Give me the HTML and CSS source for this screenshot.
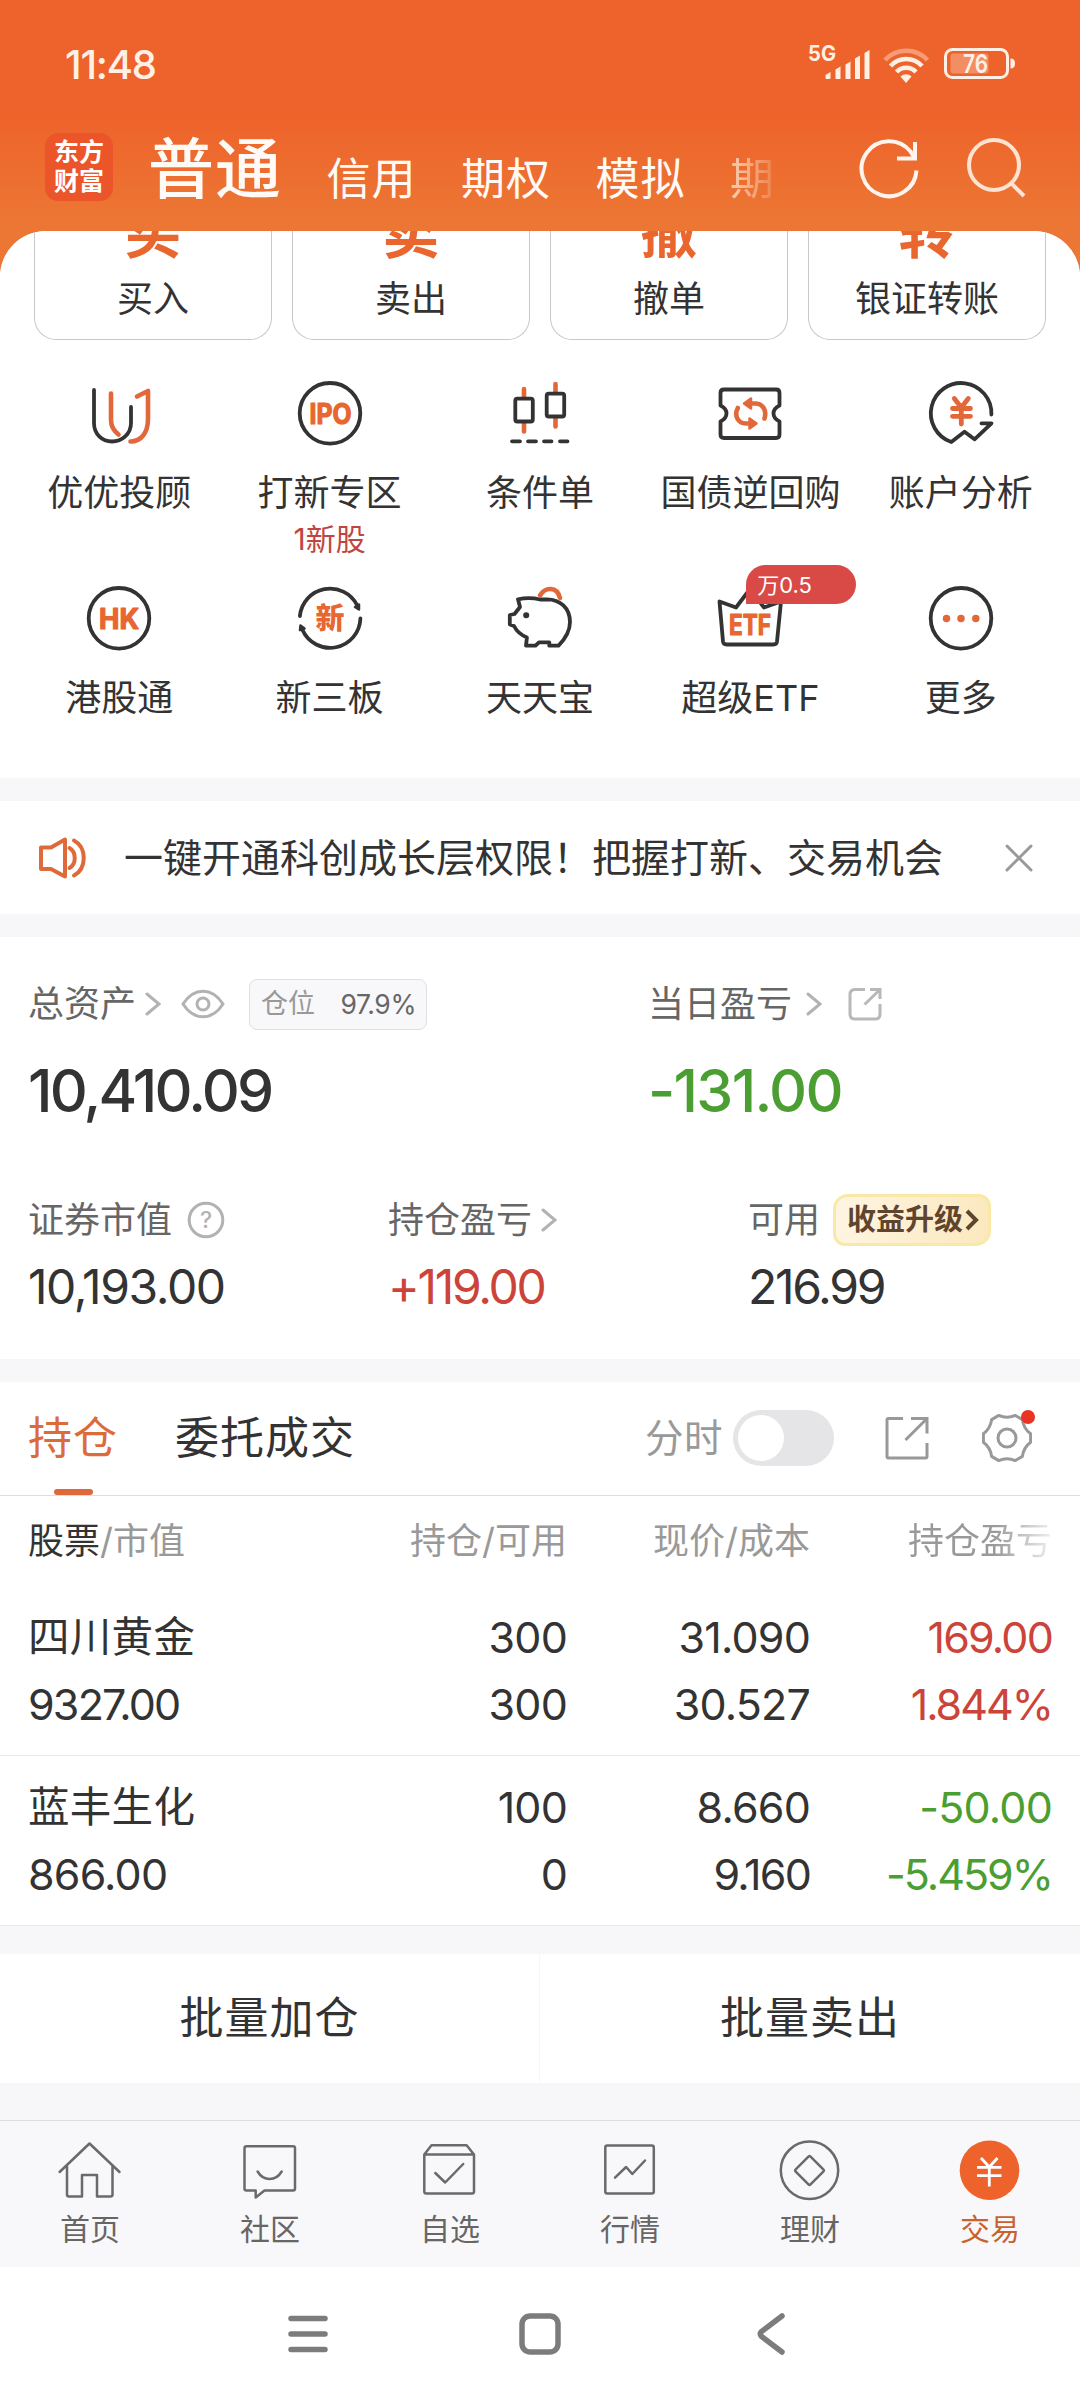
FILE: index.html
```html
<!DOCTYPE html>
<html lang="zh-CN">
<head>
<meta charset="utf-8">
<title>交易</title>
<link rel="stylesheet" href="styles.css">
</head>
<body>
<div class="app">
  <header class="top">
    <div class="status">
      <span class="clock">11:48</span>
      <svg class="status-icons" width="212" height="44" viewBox="0 0 212 44" fill="#fff0e6">
        <text class="net" x="0" y="21" textLength="28" lengthAdjust="spacingAndGlyphs">5G</text>
        <path d="M17.500 38v-3l5-3v6q0 1-1 1h-3q-1 0-1-1zM27.500 39V29.500l5-3V39zM37.500 39V24.500l5-3V39zM47 39V18.500l5-3V39zM56.500 39V13l5-3v29z"/>
        <g fill="none" stroke="#fff0e6" stroke-width="4.500">
          <path d="M77 20a29 29 0 0 1 42.500 0" stroke-opacity=".4"/>
          <path d="M82.500 26a21 21 0 0 1 31.500 0"/>
          <path d="M88.500 32a13.500 13.500 0 0 1 19.500 0"/>
          <rect x="137.500" y="9.500" width="62" height="28" rx="7" stroke-width="3"/>
        </g>
        <path d="M98 43l-5.500-6.500a8 8 0 0 1 11 0z"/>
        <rect x="142.500" y="13.500" width="38" height="20" rx="3" fill-opacity=".3"/>
        <path d="M202.500 18.500q4.500 0 4.500 5t-4.500 5z"/>
        <text class="level" x="155" y="33" textLength="25" lengthAdjust="spacingAndGlyphs">76</text>
      </svg>
    </div>
    <div class="titlebar">
      <div class="logo">东方<br>财富</div>
      <nav class="modes">
        <span class="mode current">普通</span>
        <span class="mode">信用</span>
        <span class="mode">期权</span>
        <span class="mode">模拟</span>
        <span class="mode faded">期</span>
      </nav>
      <svg class="refresh" width="64" height="64" viewBox="0 0 64 64" fill="none" stroke="#fff5ee" stroke-width="4">
        <path d="M59.500 34.500A27.500 27.500 0 1 1 53.500 15.500L57 21"/><path d="M58 6V22.500H40"/>
      </svg>
      <svg class="search" width="64" height="64" viewBox="0 0 64 64" fill="none" stroke="#ffe3d2" stroke-width="4">
        <circle cx="29" cy="29" r="25"/><path d="M46 47L59 60"/>
      </svg>
    </div>
  </header>

  <main class="sheet">
    <section class="trade-cards">
      <a class="trade-card"><b>买</b><span>买入</span></a>
      <a class="trade-card"><b>卖</b><span>卖出</span></a>
      <a class="trade-card"><b>撤</b><span>撤单</span></a>
      <a class="trade-card"><b>转</b><span>银证转账</span></a>
    </section>

    <section class="tools">
      <a class="tool">
        <svg class="ico" viewBox="0 0 72 72"><path d="M11 13V46C11 57 19 64.500 29 64.500S48 57 48 46V30"/><path class="o" d="M28 16.500V43C28 49 31 54 35.500 57.500M54 19.500L65 14V42C65 56 58 64.500 47.500 64.500"/></svg>
        <span>优优投顾</span>
      </a>
      <a class="tool">
        <svg class="ico" viewBox="0 0 72 72"><circle cx="36" cy="36.300" r="30.300"/><text class="glyph" x="15.500" y="46.500" textLength="42" lengthAdjust="spacingAndGlyphs">IPO</text></svg>
        <span>打新专区</span><em>1新股</em>
      </a>
      <a class="tool">
        <svg class="ico" viewBox="0 0 72 72"><path class="o" d="M20 12v9M20 46v8.500M51.500 7v9M51.500 41v8.500"/><rect x="11.300" y="21.700" width="17.500" height="22.800" rx="2"/><rect x="42.700" y="16.700" width="17.500" height="22.800" rx="2"/><path class="dash" d="M8 64.300h8M24 64.300h8M40 64.300h7.500M56 64.300h7.500"/></svg>
        <span>条件单</span>
      </a>
      <a class="tool">
        <svg class="ico" viewBox="0 0 72 72"><path d="M10 12.500H62q3.500 0 3.500 3.500V28.500q-6 3-6 8t6 8V57.500q0 3.500-3.500 3.500H10q-3.500 0-3.500-3.500V44.500q6-3 6-8t-6-8V16q0-3.500 3.500-3.500z"/><path class="o" d="M36 26.500h5c8 0 12 7 9.500 15M23.800 31c-4 8 .5 15.500 8 15.500h5"/><path class="of" d="M30 26.500l7-5v10zM42.500 46.500l-7-5v10z"/></svg>
        <span>国债逆回购</span>
      </a>
      <a class="tool">
        <svg class="ico" viewBox="0 0 72 72"><path d="M66.400 37.500A30.300 30.300 0 1 0 26.300 65L39.500 54.700L49.500 62.300L66.500 46.300H56.500"/><path class="o bold" d="M29.300 21.500L36.300 30.500L43.300 21.500M36.300 31V47M27.500 31.500H45.500M27.500 39.300H45.500"/></svg>
        <span>账户分析</span>
      </a>
      <a class="tool">
        <svg class="ico" viewBox="0 0 72 72"><circle cx="36" cy="36.300" r="30.300"/><text class="glyph" x="16" y="47" textLength="40" lengthAdjust="spacingAndGlyphs">HK</text></svg>
        <span>港股通</span>
      </a>
      <a class="tool">
        <svg class="ico" viewBox="0 0 72 72"><path d="M5.900 34A30.300 30.300 0 0 1 63 23M66.400 36.500A30.300 30.300 0 0 1 8.500 48"/><path class="df" d="M61 25l4-2.500v5zM6.500 43.500l4 3-4.500 1.500z"/><text class="glyph cjk" x="21.500" y="47" textLength="30">新</text></svg>
        <span>新三板</span>
      </a>
      <a class="tool">
        <svg class="ico" viewBox="0 0 72 72"><path d="M36 17.500C30 16 20 16 14 17.300L16 25L10.500 32L5.800 33V42.500L10 44C13 50 17 53 22.900 55.500L22 63.700H31.500L35 60.300H45.300V63.700H54.500C62 56 66 49 66 40C66 26 56 17.300 43 17.300Z"/><circle class="df" cx="22.200" cy="33.300" r="1.800"/><path class="o" d="M36 13.500C41 5 53 4 56 16"/></svg>
        <span>天天宝</span>
      </a>
      <a class="tool">
        <svg class="ico" viewBox="0 0 72 72"><path d="M5.500 19.500L22 25.500L36 7L50 25.500L67 19.500L63 59.500q-.4 3-3.500 3H12.500q-3 0-3.500-3z"/><text class="glyph" x="15" y="53" textLength="42" lengthAdjust="spacingAndGlyphs">ETF</text></svg>
        <span>超级ETF</span><i class="rate">万0.5</i>
      </a>
      <a class="tool">
        <svg class="ico" viewBox="0 0 72 72"><circle cx="36" cy="36.300" r="30.300"/><g class="of"><circle cx="21.500" cy="36.500" r="2.500"/><circle cx="36" cy="36.500" r="2.500"/><circle cx="50.800" cy="36.500" r="2.500"/></g></svg>
        <span>更多</span>
      </a>
    </section>

    <section class="notice">
      <svg width="50" height="46" viewBox="0 0 50 46" fill="none" stroke="#de6a3a" stroke-width="4" stroke-linejoin="round" stroke-linecap="round"><path d="M4 12.500H14L28 4.500V41.500L14 34H4zM32.500 13c7 4 7 16 0 20M37 5.500c13 7 13 28 0 35"/></svg>
      <p>一键开通科创成长层权限！把握打新、交易机会</p>
      <svg class="close" width="28" height="28" viewBox="0 0 28 28" stroke="#999" stroke-width="3" stroke-linecap="round"><path d="M2 2L26 26M26 2L2 26"/></svg>
    </section>

    <section class="assets">
      <div class="asset-main">
        <div class="asset">
          <div class="label">总资产
            <svg class="chev" viewBox="0 0 16 24"><path d="M2 2L14 12L2 22"/></svg>
            <svg class="eye" width="44" height="32" viewBox="0 0 44 32" fill="none" stroke="#b2b2b2" stroke-width="3"><path d="M2 16C13-1 31-1 42 16C31 33 13 33 2 16z"/><circle cx="22" cy="16" r="6"/></svg>
            <span class="chip"><span>仓位</span><b>97.9%</b></span>
          </div>
          <div class="total">10,410.09</div>
        </div>
        <div class="asset">
          <div class="label">当日盈亏
            <svg class="chev wide" viewBox="0 0 16 24"><path d="M2 2L14 12L2 22"/></svg>
            <svg class="share" width="34" height="34" viewBox="0 0 34 34" fill="none" stroke="#b8b8b8" stroke-width="3"><path d="M17 2.500H7Q2 2.500 2 7.500V27Q2 32 7 32H27Q32 32 32 27V17M22 2.500H32V12M32 2.500L16.500 17.500"/></svg>
          </div>
          <div class="total down day">-131.00</div>
        </div>
      </div>
      <div class="asset-sub">
        <div class="asset">
          <div class="label">证券市值
            <svg class="help" width="38" height="38" viewBox="0 0 38 38"><circle cx="19" cy="19" r="16.800" fill="none" stroke="#b2b2b2" stroke-width="3"/><text x="19" y="27">?</text></svg>
          </div>
          <div class="value">10,193.00</div>
        </div>
        <div class="asset">
          <div class="label">持仓盈亏
            <svg class="chev" viewBox="0 0 16 24"><path d="M2 2L14 12L2 22"/></svg>
          </div>
          <div class="value tight up">+119.00</div>
        </div>
        <div class="asset">
          <div class="label">可用
            <span class="boost">收益升级<svg width="14" height="22" viewBox="0 0 14 22" fill="none" stroke="#5f452d" stroke-width="4"><path d="M2 2L11 11L2 20"/></svg></span>
          </div>
          <div class="value tight">216.99</div>
        </div>
      </div>
    </section>

    <section class="holdings">
      <div class="tabs">
        <span class="tab active">持仓</span>
        <span class="tab">委托成交</span>
        <span class="minute">分时</span>
        <span class="switch"></span>
        <svg class="popout" width="44" height="44" viewBox="0 0 44 44" fill="none" stroke="#999" stroke-width="3"><path d="M18 2.500H3.500Q2 2.500 2 4V40.500Q2 42 3.500 42H40.500Q42 42 42 40.500V27M26 2.500H42V17.500M42 2.500L20.500 24"/></svg>
        <span class="gear">
          <svg width="50" height="50" viewBox="0 0 50 50" fill="none" stroke="#999" stroke-width="3" stroke-linejoin="round"><path d="M48.600 20.800V29.200Q41.500 34.500 40.400 43.400L33.200 47.600Q25 44 16.800 47.600L9.600 43.400Q8.500 34.500 1.400 29.200V20.800Q8.500 15.500 9.600 6.600L16.800 2.400Q25 6 33.200 2.400L40.400 6.600Q41.500 15.500 48.600 20.800z"/><circle cx="25" cy="25" r="9"/></svg>
        </span>
      </div>
      <div class="grid-row head">
        <span><b>股票</b>/市值</span><span>持仓/可用</span><span>现价/成本</span><span class="fade">持仓盈亏</span>
      </div>
      <div class="grid-row stock">
        <span class="name">四川黄金</span><span>300</span><span>31.090</span><span class="up tight">169.00</span>
        <span class="tight">9327.00</span><span>300</span><span>30.527</span><span class="up pct">1.844%</span>
      </div>
      <div class="grid-row stock">
        <span class="name">蓝丰生化</span><span>100</span><span>8.660</span><span class="down">-50.00</span>
        <span>866.00</span><span>0</span><span class="tight">9.160</span><span class="down pct">-5.459%</span>
      </div>
    </section>

    <section class="batch"><a>批量加仓</a><a>批量卖出</a></section>

    <nav class="tabbar">
      <a><svg viewBox="0 0 72 72"><path d="M5.600 38L35.500 9.500L65.500 38M13 32V60.500q0 2 2 2H28V41H43V62.500H56.500q2 0 2-2V32"/></svg>首页</a>
      <a><svg viewBox="0 0 72 72"><path d="M12.500 12.300H59q2 0 2 2V54.500q0 2-2 2H30.500L21.700 63.500V56.500H12.500q-2 0-2-2V14.300q0-2 2-2zM23.600 37.500Q28 45 35.600 45T47.700 37.500"/></svg>社区</a>
      <a><svg viewBox="0 0 72 72"><path d="M10.300 20.500L17.500 11.300H52.600L60 20.500V57.500q0 2-2 2H12.300q-2 0-2-2zH60M21.300 39L31.200 48.500L49.200 30"/></svg>自选</a>
      <a><svg viewBox="0 0 72 72"><rect x="11.300" y="11.500" width="48.500" height="48" rx="2"/><path d="M21 43.700L32.100 33L38.300 40L51 26.500"/></svg>行情</a>
      <a><svg viewBox="0 0 72 72"><circle cx="35.500" cy="36.300" r="28.700"/><rect x="25" y="26" width="21" height="21" rx="1.500" transform="rotate(45 35.500 36.500)"/></svg>理财</a>
      <a class="active"><svg viewBox="0 0 72 72"><circle class="disc" cx="35.500" cy="36.300" r="29.800"/><path class="yen" d="M27 24L35.300 33L43.500 24M35.300 33V52.500M23 33.300H47.500M23 41.700H47.500"/></svg>交易</a>
    </nav>
  </main>

  <footer class="sysnav">
    <svg viewBox="0 0 48 48"><path d="M7 8.500H41M7 24H41M7 39.500H41"/></svg>
    <svg viewBox="0 0 48 48"><rect x="6" y="6" width="36" height="36" rx="8"/></svg>
    <svg viewBox="0 0 48 48"><path d="M34 6L13.500 21.500Q11 24 13.500 26.500L34 42"/></svg>
  </footer>
</div>
</body>
</html>
```
FILE: styles.css
```css
* { box-sizing: border-box; }
body {
  margin: 0;
  width: 1080px;
  background: #fff;
  color: #333;
  font-family: Inter, "Noto Sans CJK SC", sans-serif;
  font-size: 36px;
  line-height: 40px;
}
.app { height: 2400px; overflow: hidden; display: flex; flex-direction: column; background: linear-gradient(#ee632b 0, #ee632b 115px, #ec7734 225px, #ec7734 400px); }
b, em, i { font-weight: inherit; font-style: normal; }
svg { flex: none; display: block; }

/* header */
.top { height: 231px; flex: none; }
.status { height: 120px; display: flex; align-items: flex-start; padding: 40px 60px 0 65px; justify-content: space-between; }
.clock { font-size: 40px; line-height: 50px; font-weight: 500; color: #fff0e6; letter-spacing: -1.2px; }
.status-icons { margin: 0 0 0 auto; }
.net { font: 700 21px Inter, sans-serif; }
.level { font: 600 26px Inter, sans-serif; }
.titlebar { display: flex; height: 111px; padding: 0 51px 0 45px; align-items: flex-start; }
.logo { width: 68px; height: 68px; margin-top: 13px; padding-top: 5px; border-radius: 13px; background: #eb5529; color: #fff; font-size: 25px; line-height: 29px; font-weight: 700; text-align: center; }
.modes { display: flex; align-items: flex-start; margin-left: 35px; color: #fffaf5; }
.mode { font-size: 44px; line-height: 48px; letter-spacing: 1px; margin: 35px 0 0 44.500px; }
.mode.current { font-size: 66px; line-height: 66px; letter-spacing: 1px; margin: 16px 0 0; font-weight: 500; }
.mode.faded { background: linear-gradient(90deg, rgba(255, 230, 210, .8), rgba(255, 230, 210, .15)); -webkit-background-clip: text; background-clip: text; color: transparent; }
.refresh { margin: 16px 0 0 auto; }
.search { margin: 16px 0 0 44px; }

/* rounded content sheet */
.sheet { background: #f7f7fa; border-radius: 46px 46px 0 0; overflow: hidden; flex: none; height: 2036px; }
.trade-cards { background: #fff; display: grid; grid-template-columns: repeat(4, 238px); gap: 20px; padding: 0 34px; height: 110px; }
.trade-card { height: 109px; border: 1px solid #c8c8c8; border-top: 0; border-radius: 0 0 22px 22px; overflow: hidden; display: flex; flex-direction: column; align-items: center; }
.trade-card b { flex: none; margin-top: -28px; height: 60px; line-height: 60px; font-size: 57px; font-weight: 700; color: #e9662f; }
.trade-card span { margin-top: 16px; font-size: 36px; }

.tools { background: #fff; height: 437px; padding: 36px 14px 0; display: grid; grid-template-columns: repeat(5, 1fr); grid-auto-rows: 205px; }
.tool { position: relative; display: flex; flex-direction: column; align-items: center; }
.tool span { margin-top: 24px; }
.tool em { margin-top: 9px; font-size: 30px; line-height: 34px; color: #c0453f; }
.rate { position: absolute; left: 101px; top: -17px; width: 110px; height: 39px; padding-left: 11px; border-radius: 20px 20px 20px 0; background: #d94a46; color: #fff; font-size: 22px; line-height: 40px; }
.ico { width: 72px; height: 72px; fill: none; stroke: #333; stroke-width: 3.800; stroke-linecap: round; stroke-linejoin: round; }
.ico .o { stroke: #e2683a; stroke-width: 4.600; }
.ico .bold { stroke-width: 4.800; }
.ico .of { fill: #e2683a; stroke: #e2683a; stroke-width: 2.500; }
.ico .df { fill: #333; stroke-width: 2.500; }
.ico .glyph { fill: #e8662f; stroke: #e8662f; stroke-width: 1.200; font: 700 28px Inter, sans-serif; }
.ico .cjk { font: 900 29px "Noto Sans CJK SC", sans-serif; stroke-width: 0; }

.notice { background: #fff; margin-top: 23px; height: 113px; display: flex; align-items: center; padding: 0 47px 0 37px; }
.notice p { margin: 0 0 0 37px; font-size: 39px; white-space: nowrap; }
.close { margin-left: auto; }

/* assets */
.assets { background: #fff; margin-top: 23px; height: 422px; padding: 41px 28px 0; }
.asset-main { display: grid; grid-template-columns: 620px 1fr; }
.asset-sub { display: grid; grid-template-columns: 360px 360px 1fr; margin-top: 72px; }
.label { display: flex; align-items: center; height: 52px; color: #666; white-space: nowrap; }
.chev { width: 16px; height: 24px; margin-left: 9px; fill: none; stroke: #b2b2b2; stroke-width: 3; stroke-linecap: round; }
.chev.wide { margin-left: 14px; }
.eye { margin-left: 20px; }
.chip { display: flex; justify-content: space-between; align-items: center; width: 178px; height: 51px; margin-left: 24px; padding: 0 10px 0 11px; border: 1px solid #e0e0e2; border-radius: 8px; background: #f8f8fa; font-size: 27px; color: #999; }
.chip b { color: #666; font-size: 26.500px; letter-spacing: -.4px; }
.share { margin-left: 26px; }
.total { margin-top: 30px; font-size: 59px; line-height: 62px; font-weight: 500; letter-spacing: -2.800px; }
.total.day { letter-spacing: -1.700px; }
.up { color: #cc4339; }
.down { color: #4a9e32; }
.help { margin-left: 15px; }
.help text { font: 500 23px Inter, sans-serif; text-anchor: middle; fill: #b2b2b2; }
.value { margin-top: 16px; font-size: 48px; line-height: 50px; letter-spacing: -1.400px; }
.value.tight { letter-spacing: -2.300px; }
.boost { display: flex; align-items: center; margin-left: 13px; width: 158px; height: 52px; padding-left: 11px; border: 3px solid #fae9a6; border-radius: 15px 12px; background: linear-gradient(100deg, #fff5e3, #fbe8bd); font-size: 29px; font-weight: 700; color: #5f452d; }
.boost svg { margin-left: 2px; }

/* holdings */
.holdings { background: #fff; margin-top: 23px; }
.tabs { height: 114px; display: flex; align-items: center; padding: 0 48px 2px 28px; border-bottom: 1.500px solid #ddd; font-size: 44px; letter-spacing: 1px; }
.tab { height: 112px; line-height: 113px; margin-right: 57px; position: relative; }
.tab.active { color: #dc6a3a; }
.tab.active::after { content: ""; position: absolute; left: 26px; bottom: -1px; width: 39px; height: 6px; border-radius: 3px; background: #e0673a; }
.minute { margin-left: auto; font-size: 38.500px; letter-spacing: .5px; color: #999; }
.switch { width: 101px; height: 56px; margin-left: 10px; border-radius: 28px; background: #e5e5e7; padding: 5px; }
.switch::before { content: ""; display: block; width: 46px; height: 46px; border-radius: 50%; background: #fff; }
.popout { margin-left: 51px; }
.gear { position: relative; margin-left: 53px; }
.gear::after { content: ""; position: absolute; right: -3px; top: -3px; width: 14px; height: 14px; border-radius: 50%; background: #e93323; }
.grid-row { display: grid; grid-template-columns: 253px 286px 243px 242px; padding-left: 28px; }
.grid-row span { text-align: right; white-space: nowrap; }
.grid-row span:nth-child(4n+1) { text-align: left; }
.head { height: 87px; padding-top: 25px; color: #999; }
.head b { color: #333; }
.head .fade { background: linear-gradient(90deg, #999 0, #999 185px, rgba(153, 153, 153, .15) 242px); -webkit-background-clip: text; background-clip: text; color: transparent; }
.stock { grid-auto-rows: 67px; height: 170px; padding-top: 18px; font-size: 43px; line-height: 66px; letter-spacing: -.8px; border-bottom: 1.500px solid #eaeaec; }
.head + .stock { height: 173px; padding-top: 21px; }
.stock .name { font-size: 41.500px; letter-spacing: .3px; }
.stock .tight { letter-spacing: -1.800px; }
.stock .pct { letter-spacing: -2px; }

.batch { background: #fff; height: 129px; margin-top: 28px; display: grid; grid-template-columns: 539px 1fr; text-align: center; line-height: 129px; font-size: 44px; letter-spacing: 1px; }
.batch a + a { border-left: 1.500px solid #f7f7f8; }

/* bottom bars */
.tabbar { margin-top: 37px; border-top: 1.500px solid #dedee0; height: 147px; background: #f8f8fa; display: grid; grid-template-columns: repeat(6, 1fr); font-size: 30px; line-height: 36px; color: #666; padding-top: 13px; }
.tabbar a { display: flex; flex-direction: column; align-items: center; gap: 5px; }
.tabbar svg { width: 72px; height: 72px; fill: none; stroke: #6a6a6a; stroke-width: 2.500; stroke-linejoin: round; stroke-linecap: round; }
.tabbar .active { color: #c9622f; }
.tabbar .disc { fill: #ee632b; stroke: none; }
.tabbar .yen { stroke: #fff; stroke-width: 2.800; stroke-linecap: butt; }
.sysnav { flex: none; height: 133px; background: #fff; display: flex; align-items: center; gap: 184px; padding-left: 284px; }
.sysnav svg { width: 48px; height: 48px; fill: none; stroke: #7c7c7c; stroke-width: 5.500; stroke-linecap: round; }
```
